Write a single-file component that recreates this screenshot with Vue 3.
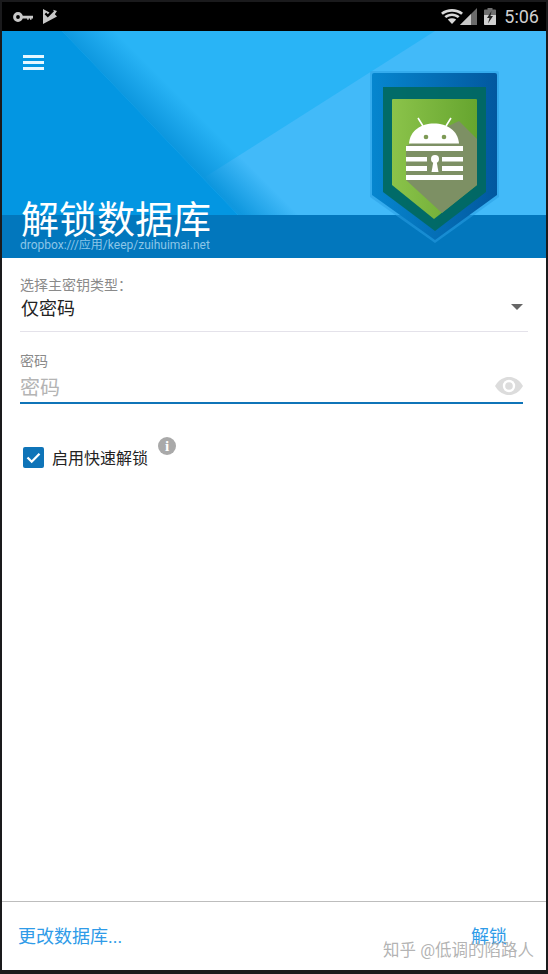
<template>
  <div class="screen">
    <div class="status-bar">
      <div class="status-left">
        <svg width="20" height="12" viewBox="0 0 20 12">
          <circle cx="5" cy="6" r="3.400" fill="none" stroke="#c8c8c8" stroke-width="3" />
          <path d="M8 4.800h12v2.600h-1.500v1.300H17V7.400h-1.300v1.300h-1.500V7.400H8z" fill="#c8c8c8" />
        </svg>
        <svg width="14" height="15" viewBox="0 0 14 15">
          <path d="M0 0l6.500 3.500L4.800 5.200 3.200 3.600 1.600 5.200l3.200 3.400L11 2.200l-1-1.500L14 2l-2.200 3.200L14 7.500 0 15z" fill="#c8c8c8" />
        </svg>
      </div>
      <div class="status-right">
        <svg width="22" height="15" viewBox="0 0 22 15">
          <path d="M0 3.800C6 -1.200 16 -1.200 22 3.800L20.200 5.800C15 1.800 7 1.800 1.800 5.800z" fill="#d8d8d8" />
          <path d="M3.400 7.200C8 3.600 14 3.600 18.600 7.200L16.800 9.100C13 6.400 9 6.400 5.200 9.100z" fill="#d8d8d8" />
          <path d="M6.800 10.500C9.500 8.700 12.500 8.700 15.200 10.500L11 15z" fill="#d8d8d8" />
        </svg>
        <svg class="signal" width="17" height="17" viewBox="0 0 17 17">
          <path d="M17 0v17H0z" fill="#6a6a6a" />
          <path d="M11 6v11H0z" fill="#c8c8c8" />
        </svg>
        <svg class="battery" width="12" height="17" viewBox="0 0 12 17">
          <path d="M3.500 0h5v1.500H11a1 1 0 0 1 1 1V16a1 1 0 0 1-1 1H1a1 1 0 0 1-1-1V2.500a1 1 0 0 1 1-1h2.500z" fill="#6f6f6f" />
          <path d="M0 7h12v9a1 1 0 0 1-1 1H1a1 1 0 0 1-1-1z" fill="#d0d0d0" />
          <path d="M7.500 3L3 10h2.500L4 15.500 9 8H6.500z" fill="#222" />
        </svg>
        <span class="clock">5:06</span>
      </div>
    </div>

    <header class="banner">
      <!-- viewBox is offset so the art can use the same numbers as the full screen -->
      <svg class="banner-art" width="544" height="227" viewBox="2 31 544 227">
        <defs>
          <linearGradient id="fold" gradientUnits="userSpaceOnUse" x1="150" y1="122" x2="178" y2="94">
            <stop offset="0" stop-color="#0a94dc" stop-opacity="0.9" />
            <stop offset="1" stop-color="#0a94dc" stop-opacity="0" />
          </linearGradient>
          <linearGradient id="shieldEdge" x1="0" y1="0" x2="1" y2="0">
            <stop offset="0" stop-color="#0686cf" />
            <stop offset="1" stop-color="#02589f" />
          </linearGradient>
          <linearGradient id="shieldGreen" x1="0" y1="0" x2="1" y2="0">
            <stop offset="0" stop-color="#8bc34a" />
            <stop offset="1" stop-color="#66a52f" />
          </linearGradient>
        </defs>
        <path d="M435 31H546V215H238L205 177z" fill="#42baf9" />
        <path d="M62 31H130L306 215H238z" fill="url(#fold)" />
        <path d="M2 31H62L238 215H2z" fill="#0396e2" />
        <rect x="2" y="215" width="544" height="43" fill="#0277bd" />

        <path d="M370 73a2 2 0 0 1 2-2H497a2 2 0 0 1 2 2V197L435 243L370 197z" fill="#2a9fe3" opacity="0.55" />
        <path d="M372 75a2 2 0 0 1 2-2H495a2 2 0 0 1 2 2V195L435 240L372 195z" fill="url(#shieldEdge)" />
        <path d="M383 87H486V192L435 231L383 192z" fill="#01695f" opacity="0.92" />
        <path d="M392 100a1 1 0 0 1 1-1H476a1 1 0 0 1 1 1V185L434 219L392 185z" fill="url(#shieldGreen)" />
        <path d="M459 121L477 139V185L442 213L406 180V146z" fill="#7d9064" />

        <path d="M418 118l5 8M451 118l-5 8" stroke="#fff" stroke-width="1.600" fill="none" />
        <path d="M409 143.500c1-13 12-20 25-20s24 7 25 20z" fill="#fff" />
        <circle cx="426" cy="137" r="2.300" fill="#7d9a55" />
        <circle cx="444" cy="137" r="2.300" fill="#7d9a55" />
        <rect x="406" y="146" width="57" height="5" fill="#fff" />
        <rect x="406" y="157" width="21" height="4.500" fill="#fff" />
        <rect x="442" y="157" width="21" height="4.500" fill="#fff" />
        <rect x="406" y="166" width="21" height="5" fill="#fff" />
        <rect x="442" y="166" width="21" height="5" fill="#fff" />
        <rect x="406" y="175" width="57" height="5" fill="#fff" />
        <circle cx="435" cy="159" r="4" fill="#fff" />
        <path d="M433.500 161h3l2 11h-7z" fill="#fff" />
      </svg>
      <button type="button" class="menu-btn" aria-label="menu">
        <span></span><span></span><span></span>
      </button>
      <div class="banner-text">
        <h1 class="banner-title">解锁数据库</h1>
        <p class="banner-path">dropbox:///应用/keep/zuihuimai.net</p>
      </div>
    </header>

    <main class="form">
      <label class="field-label">选择主密钥类型：</label>
      <div class="select-row">
        <span>仅密码</span>
        <i class="caret"></i>
      </div>

      <label class="field-label pw-label">密码</label>
      <div class="pw-row">
        <span class="pw-placeholder">密码</span>
        <svg width="28" height="20" viewBox="0 0 28 20">
          <path d="M0 10C4 3.500 9 1 14 1s10 2.500 14 9c-4 6.500-9 9-14 9S4 16.500 0 10z" fill="#dcdcdc" />
          <circle cx="14" cy="10" r="6.200" fill="#fff" />
          <circle cx="14" cy="10" r="3.800" fill="#dcdcdc" />
        </svg>
      </div>

      <div class="quick-row">
        <span class="check">
          <svg width="21" height="21" viewBox="0 0 21 21">
            <path d="M4.500 10.500l4.200 4.200 7.800-8" fill="none" stroke="#fff" stroke-width="2.300" />
          </svg>
        </span>
        <span class="quick-text">启用快速解锁</span>
        <span class="info">i</span>
      </div>
    </main>

    <footer class="footer">
      <a class="foot-link">更改数据库...</a>
      <a class="foot-link">解锁</a>
      <span class="watermark">知乎 @低调的陷路人</span>
    </footer>
  </div>
</template>

<script setup>
</script>

<style>
html,
body {
  margin: 0;
  background: #1a1a1c;
}
</style>

<style scoped>
.screen {
  display: flex;
  flex-direction: column;
  box-sizing: border-box;
  width: 548px;
  height: 974px;
  padding: 2px 2px 4px;
  background: #1a1a1c;
  font-family: "Roboto", "Noto Sans CJK SC", sans-serif;
}

.status-bar {
  display: flex;
  align-items: center;
  justify-content: space-between;
  flex-shrink: 0;
  height: 29px;
  padding: 0 7px 0 11px;
  background: #000;
}

.status-left {
  display: flex;
  align-items: center;
  gap: 10px;
}

.status-right {
  display: flex;
  align-items: center;
}

.signal {
  margin-left: -3px;
}

.battery {
  margin-left: 7px;
}

.clock {
  margin-left: 8px;
  color: #d0d0d0;
  font-size: 18px;
}

.banner {
  position: relative;
  display: flex;
  flex-direction: column;
  justify-content: space-between;
  flex-shrink: 0;
  box-sizing: border-box;
  height: 227px;
  padding: 24px 18px 6px;
  overflow: hidden;
  background: #29b4f6;
}

.banner-art {
  position: absolute;
  top: 0;
  left: 0;
}

.menu-btn {
  position: relative;
  display: flex;
  flex-direction: column;
  gap: 3px;
  width: 22px;
  margin-left: 3px;
  padding: 0;
  border: none;
  background: transparent;
}

.menu-btn span {
  display: block;
  width: 21px;
  height: 3px;
  background: #e6f7ff;
}

.banner-text {
  position: relative;
}

.banner-title {
  margin: 0 0 0 1px;
  color: #fff;
  font-size: 38px;
  font-weight: 400;
  line-height: 37px;
}

.banner-path {
  margin: 0;
  color: #8cc6e8;
  font-size: 12px;
  line-height: 13px;
}

.form {
  display: flex;
  flex-direction: column;
  flex: 1;
  padding: 20px 18px 0;
  background: #fff;
}

.field-label {
  color: #8a8a8a;
  font-size: 14px;
  line-height: 15px;
}

.select-row {
  display: flex;
  align-items: center;
  justify-content: space-between;
  box-sizing: border-box;
  height: 39px;
  padding: 0 5px 10px 1px;
  border-bottom: 1px solid #e4e2ea;
  color: #222;
  font-size: 18px;
}

.caret {
  width: 0;
  height: 0;
  border-top: 6px solid #666;
  border-left: 6px solid transparent;
  border-right: 6px solid transparent;
}

.pw-label {
  margin-top: 22px;
}

.pw-row {
  display: flex;
  align-items: center;
  justify-content: space-between;
  box-sizing: border-box;
  height: 35px;
  margin-right: 5px;
  padding-top: 1px;
  border-bottom: 2px solid #0f74b8;
}

.pw-placeholder {
  color: #b4b4b4;
  font-size: 20px;
}

.quick-row {
  position: relative;
  display: flex;
  align-items: center;
  margin: 41px 0 0 3px;
}

.check {
  display: block;
  width: 21px;
  height: 21px;
  border-radius: 2px;
  background: #0f74b8;
}

.quick-text {
  margin-left: 8px;
  color: #222;
  font-size: 16px;
}

.info {
  position: absolute;
  top: -8px;
  left: 135px;
  display: grid;
  place-items: center;
  width: 18px;
  height: 18px;
  border-radius: 50%;
  background: #a9a9a9;
  color: #fff;
  font-family: "Liberation Serif", serif;
  font-size: 15px;
  font-weight: 700;
}

.footer {
  position: relative;
  display: flex;
  align-items: center;
  justify-content: space-between;
  flex-shrink: 0;
  box-sizing: border-box;
  height: 69px;
  padding: 0 39px 2px 16px;
  border-top: 1px solid #bdbdbd;
  background: #fff;
}

.foot-link {
  color: #2f9be8;
  font-size: 18px;
}

.watermark {
  position: absolute;
  right: 12px;
  bottom: 9px;
  color: rgba(160, 160, 160, 0.8);
  font-size: 16.500px;
}
</style>
